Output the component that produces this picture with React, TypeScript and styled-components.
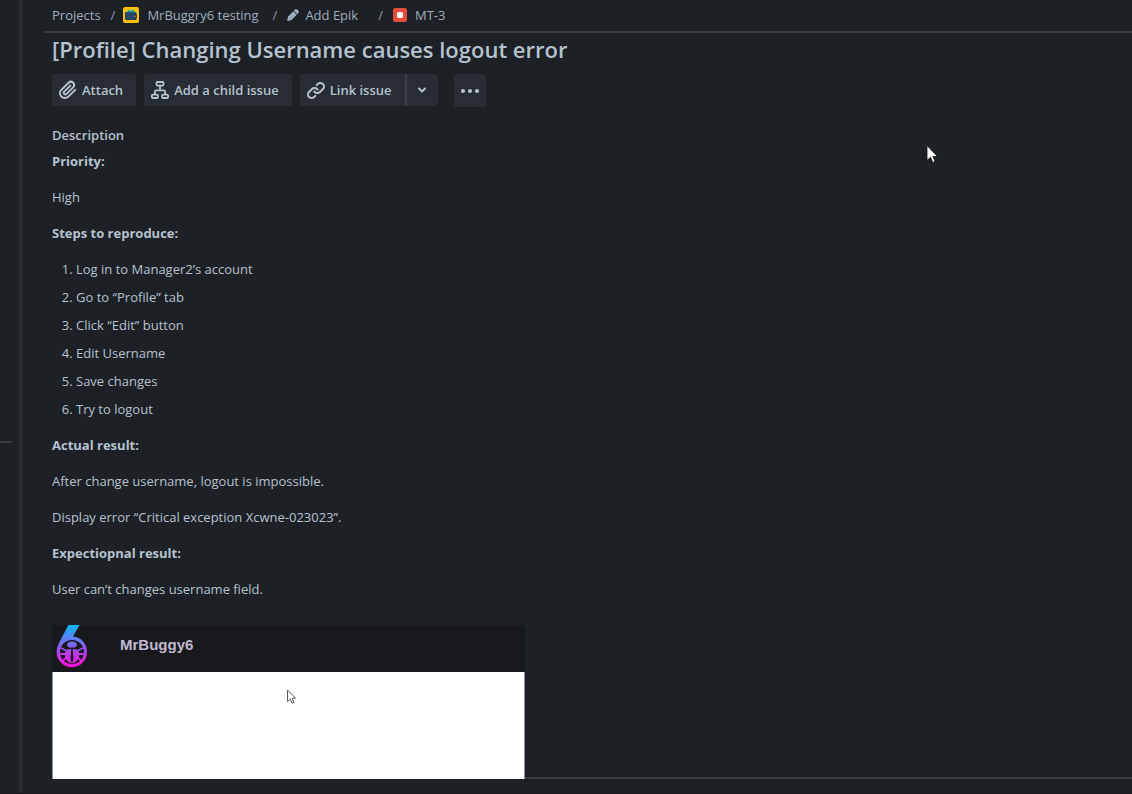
import React from "react";
import styled, { createGlobalStyle } from "styled-components";

const GlobalStyle = createGlobalStyle`
  *, *::before, *::after { box-sizing: border-box; }
  html, body { margin: 0; background: #1d2125; }
  body {
    font-family: "Open Sans", sans-serif;
    font-size: 13px;
    line-height: 24px;
    color: #b6c2cf;
    overflow-x: hidden;
  }
`;

const Page = styled.div`
  position: relative;
  display: flex;
  min-height: 100vh;
  border-bottom: 1px solid #18161b;
`;

const Rail = styled.aside`
  flex: 0 0 22px;
  border-right: 3px solid #2a2e33;
`;

const RailSection = styled.div`
  width: 12px;
  height: 443px;
  border-bottom: 2px solid #353c42;
`;

const Main = styled.main`
  flex: 1;
  min-width: 0;
  padding-left: 22px;
`;

const Breadcrumbs = styled.nav`
  display: flex;
  align-items: center;
  height: 33px;
  padding: 0 8px 2px;
  border-bottom: 2px solid #353c42;
`;

const Crumb = styled.a<{ $end?: number; $gap?: number }>`
  display: inline-flex;
  align-items: center;
  gap: ${(p) => p.$gap ?? 8}px;
  margin-right: ${(p) => p.$end ?? 10}px;
  color: #9fadbc;
  text-decoration: none;
  white-space: nowrap;
`;

const Slash = styled.span<{ $end?: number }>`
  margin-right: ${(p) => p.$end ?? 8}px;
  color: #8c9bab;
`;

const Body = styled.div`
  padding: 2px 0 0 8px;
`;

const Title = styled.h1`
  margin: 0 0 11px;
  font-size: 22px;
  line-height: 28px;
  font-weight: 600;
`;

const Toolbar = styled.div`
  display: flex;
  align-items: flex-start;
  gap: 8px;
  margin-bottom: 16px;
`;

const Button = styled.button<{ $width?: number; $height?: number }>`
  display: inline-flex;
  align-items: center;
  justify-content: ${(p) => (p.$width ? "center" : "flex-start")};
  gap: 4px;
  width: ${(p) => (p.$width ? p.$width + "px" : "auto")};
  height: ${(p) => p.$height ?? 32}px;
  padding: ${(p) => (p.$width ? "0" : "0 13px 0 6px")};
  border: 0;
  border-radius: 3px;
  background: #282d33;
  color: #b6c2cf;
  font: 600 13px/20px "Open Sans", sans-serif;
  white-space: nowrap;
  cursor: pointer;
`;

const SplitButton = styled.div`
  display: flex;
  margin-right: 8px;

  ${Button}:first-child { border-radius: 3px 0 0 3px; }
  ${Button}:last-child {
    border-radius: 0 3px 3px 0;
    border-left: 2px solid #38414a;
  }
`;

const SectionLabel = styled.h2`
  margin: 0 0 2px;
  font-size: 13px;
  line-height: 24px;
  font-weight: 600;
`;

const Description = styled.div`
  display: flex;
  flex-direction: column;
  gap: 12px;
  margin-bottom: 24px;
`;

const Paragraph = styled.p`
  margin: 0;
`;

const Steps = styled.ol`
  display: flex;
  flex-direction: column;
  gap: 4px;
  margin: 0;
  padding-left: 24px;
`;

const AttachmentRow = styled.div`
  display: flex;
  align-items: flex-end;
`;

const Attachment = styled.figure`
  flex: 0 1 473px;
  margin: 0;
`;

const AppBar = styled.div`
  display: flex;
  align-items: flex-start;
  gap: 32px;
  height: 47px;
  padding-left: 4px;
  border-radius: 3px 3px 0 0;
  background: #18191d;
  color: #c3b9cf;
  font: 700 15px/40px "Liberation Sans", sans-serif;
`;

const AppContent = styled.div`
  position: relative;
  height: 107px;
  border: solid #8b8f92;
  border-width: 0 1px;
  background: #fff;
`;

const Rule = styled.div`
  flex: 1;
  height: 2px;
  background: #353c42;
`;

const Pointer = styled.svg<{ $left: number; $top: number }>`
  position: absolute;
  left: ${(p) => p.$left}px;
  top: ${(p) => p.$top}px;
`;

const steps = [
  "Log in to Manager2’s account",
  "Go to “Profile” tab",
  "Click “Edit” button",
  "Edit Username",
  "Save changes",
  "Try to logout",
];

const WalletIcon = () => (
  <svg width="16" height="16" viewBox="0 0 16 16" aria-hidden="true">
    <rect width="16" height="16" rx="2" fill="#ffc107" />
    <path d="M3 5.500 5 3l2 .8L10 2.400l2.500 2.800v1H3z" fill="#21c5c7" />
    <path d="M5 4.600l2-.8 1 1.200 2-1.400 1 1.400" stroke="#16706f" strokeWidth=".7" fill="none" />
    <path d="M2 5.300h10.400c.9 0 1.200.5 1.200 1.200v5.300c0 .8-.5 1.200-1.200 1.200H3.400C2.500 13 2 12.500 2 11.800z" fill="#243d61" />
    <rect x="3.500" y="6.500" width="7" height="5.500" fill="#2a4a70" />
    <rect x="11" y="8" width="3" height="2.600" rx=".8" fill="#1a2944" />
    <circle cx="12" cy="9.300" r=".7" fill="#ffc107" />
  </svg>
);

const PencilIcon = () => (
  <svg width="12" height="12" viewBox="0 0 12 12" fill="#9fadbc" aria-hidden="true">
    <path d="M1 7.500 6.300 2.200l3.500 3.500-5.300 5.300-3.500.9c-.5.1-.8-.2-.7-.7z" />
    <path d="M6.800 1.700 8 .6c.6-.6 1.600-.6 2.200 0l1.200 1.200c.6.6.6 1.600 0 2.200l-1.100 1.200z" />
  </svg>
);

const BugTypeIcon = () => (
  <svg width="14" height="14" viewBox="0 0 14 14" aria-hidden="true">
    <rect width="14" height="14" rx="2" fill="#e5493a" />
    <circle cx="7" cy="7" r="3.200" fill="#fff" />
  </svg>
);

const ClipIcon = () => (
  <svg width="20" height="20" viewBox="2 2 20 20" fill="currentColor" aria-hidden="true">
    <path d="M11.643 17.965c-1.530 1.495-4.016 1.496-5.542.004a3.773 3.773 0 0 1 .002-5.412l7.147-6.985a2.316 2.316 0 0 1 3.233-.003c.893.873.895 2.282.004 3.153l-6.703 6.550a.653.653 0 0 1-.914-.008.62.62 0 0 1 .001-.890l6.229-6.087a.941.941 0 0 0 0-1.353.995.995 0 0 0-1.384 0l-6.230 6.087a2.502 2.502 0 0 0 0 3.600 2.643 2.643 0 0 0 3.683 0l6.703-6.549a4.172 4.172 0 0 0 0-6.034 4.330 4.330 0 0 0-6.012-.002L4.712 11.200a5.631 5.631 0 0 0-.002 8.120c2.290 2.239 6.021 2.238 8.318-.007l6.900-6.741a.941.941 0 0 0 0-1.353.995.995 0 0 0-1.384 0z" />
  </svg>
);

const ChildIcon = () => (
  <svg width="20" height="20" viewBox="0 0 20 20" fill="none" stroke="currentColor" strokeWidth="1.800" aria-hidden="true">
    <rect x="6.500" y="2" width="7" height="3.600" rx="1" />
    <rect x="1.900" y="14.600" width="6" height="3.400" rx="1" />
    <rect x="12.100" y="14.600" width="6" height="3.400" rx="1" />
    <path d="M10 5.600v4.700M4.900 14.600v-3.200c0-.6.4-1 1-1h8.200c.6 0 1 .4 1 1v3.200" />
  </svg>
);

const LinkIcon = () => (
  <svg width="20" height="20" viewBox="2 2 20 20" fill="currentColor" aria-hidden="true">
    <path d="M12.856 5.457l-.937.920a1.002 1.002 0 0 0 0 1.437 1.047 1.047 0 0 0 1.463 0l.984-.966c.967-.950 2.542-1.135 3.602-.288a2.540 2.540 0 0 1 .203 3.810l-2.903 2.852a2.646 2.646 0 0 1-3.696 0l-1.110-1.090L9 13.570l1.108 1.089c1.822 1.788 4.802 1.788 6.622 0l2.905-2.852a4.558 4.558 0 0 0-.357-6.820c-1.893-1.517-4.695-1.226-6.422.470" />
    <path d="M11.144 19.543l.937-.920a1.002 1.002 0 0 0 0-1.437 1.047 1.047 0 0 0-1.462 0l-.985.966c-.967.950-2.542 1.135-3.602.288a2.540 2.540 0 0 1-.203-3.810l2.903-2.852a2.646 2.646 0 0 1 3.696 0l1.110 1.090L15 11.430l-1.108-1.089c-1.822-1.788-4.802-1.788-6.622 0l-2.905 2.852a4.558 4.558 0 0 0 .357 6.820c1.893 1.517 4.695 1.226 6.422-.470" />
  </svg>
);

const ChevronIcon = () => (
  <svg width="10" height="8" viewBox="0 0 10 8" fill="none" stroke="currentColor" strokeWidth="2" strokeLinecap="round" strokeLinejoin="round" aria-hidden="true">
    <path d="M2 2.500l3 3 3-3" />
  </svg>
);

const MoreIcon = () => (
  <svg width="20" height="6" viewBox="0 0 20 6" fill="currentColor" aria-hidden="true">
    <circle cx="3" cy="3" r="2.100" />
    <circle cx="10" cy="3" r="2.100" />
    <circle cx="17" cy="3" r="2.100" />
  </svg>
);

const BuggyLogo = () => (
  <svg width="32" height="43" viewBox="0 0 32 43" aria-hidden="true">
    <defs>
      <linearGradient id="buggy" gradientUnits="userSpaceOnUse" x1="0" y1="0" x2="0" y2="43">
        <stop offset="0" stopColor="#12b4f8" />
        <stop offset=".25" stopColor="#4b8cf4" />
        <stop offset=".5" stopColor="#8b5cf0" />
        <stop offset=".75" stopColor="#d02be6" />
        <stop offset="1" stopColor="#ff0ad6" />
      </linearGradient>
    </defs>
    <path
      fill="url(#buggy)"
      fillRule="evenodd"
      d="M12.500 0H23.500l-6.500 11.500C25.500 12 31 19 31 27a15.200 15.200 0 0 1-30.400 0c0-4.500 1.900-8.500 4-12.300zM16 15a12 12 0 1 0 0 24 12 12 0 0 0 0-24z"
    />
    <g fill="url(#buggy)">
      <path d="M11 20.500c0-2.500 2-4 5-4s5 1.500 5 4l-2 2h-6z" />
      <path d="M10 25q3-1 5.400-1L14.500 34 16 38.500 13 37.500c-3-2-4-5-4-8 0-2 .2-3 1-4.500z" />
      <path d="M22 25q-3-1-5.400-1L17.500 34 16 38.500l3-1c3-2 4-5 4-8 0-2-.2-3-1-4.500z" />
    </g>
    <path d="M3 22l7 3.500M3 29h7M6.500 36l4.500-4M29 22l-7 3.500M29 29h-7M25.500 36 21 32" stroke="url(#buggy)" strokeWidth="1.800" fill="none" />
  </svg>
);

export default function App() {
  return (
    <>
      <GlobalStyle />
      <Page>
        <Rail>
          <RailSection />
        </Rail>
        <Main>
          <Breadcrumbs aria-label="Breadcrumbs">
            <Crumb href="#projects">Projects</Crumb>
            <Slash>/</Slash>
            <Crumb href="#project" $end={14}><WalletIcon />MrBuggry6 testing</Crumb>
            <Slash $end={10}>/</Slash>
            <Crumb href="#epic" $end={20} $gap={6}><PencilIcon />Add Epik</Crumb>
            <Slash $end={10}>/</Slash>
            <Crumb href="#issue"><BugTypeIcon />MT-3</Crumb>
          </Breadcrumbs>
          <Body>
            <Title>[Profile] Changing Username causes logout error</Title>
            <Toolbar>
              <Button type="button"><ClipIcon />Attach</Button>
              <Button type="button"><ChildIcon />Add a child issue</Button>
              <SplitButton>
                <Button type="button"><LinkIcon />Link issue</Button>
                <Button type="button" $width={33} aria-label="Link options"><ChevronIcon /></Button>
              </SplitButton>
              <Button type="button" $width={32} $height={33} aria-label="More actions"><MoreIcon /></Button>
            </Toolbar>
            <SectionLabel>Description</SectionLabel>
            <Description>
              <Paragraph><strong>Priority:</strong></Paragraph>
              <Paragraph>High</Paragraph>
              <Paragraph><strong>Steps to reproduce:</strong></Paragraph>
              <Steps>
                {steps.map((step) => <li key={step}>{step}</li>)}
              </Steps>
              <Paragraph><strong>Actual result:</strong></Paragraph>
              <Paragraph>After change username, logout is impossible.</Paragraph>
              <Paragraph>Display error “Critical exception Xcwne-023023”.</Paragraph>
              <Paragraph><strong>Expectiopnal result:</strong></Paragraph>
              <Paragraph>User can’t changes username field.</Paragraph>
            </Description>
            <AttachmentRow>
              <Attachment>
                <AppBar><BuggyLogo />MrBuggy6</AppBar>
                <AppContent>
                  <Pointer $left={233} $top={17} width="12" height="16" viewBox="0 0 12 16" aria-hidden="true">
                    <path d="M1.500 1v11.500l2.700-2.300 1.900 4 1.900-.9-1.900-3.900 3.400-.3z" fill="#fff" stroke="#55585e" strokeWidth="1" />
                  </Pointer>
                </AppContent>
              </Attachment>
              <Rule />
            </AttachmentRow>
          </Body>
        </Main>
        <Pointer $left={926} $top={144} width="13" height="20" viewBox="0 0 13 20" aria-hidden="true">
          <path d="M1 1.500v15l3.500-3.200 2.300 5.100 2.300-1-2.300-4.900h4.700z" fill="#fff" stroke="#0b0d10" strokeWidth=".8" />
        </Pointer>
      </Page>
    </>
  );
}
